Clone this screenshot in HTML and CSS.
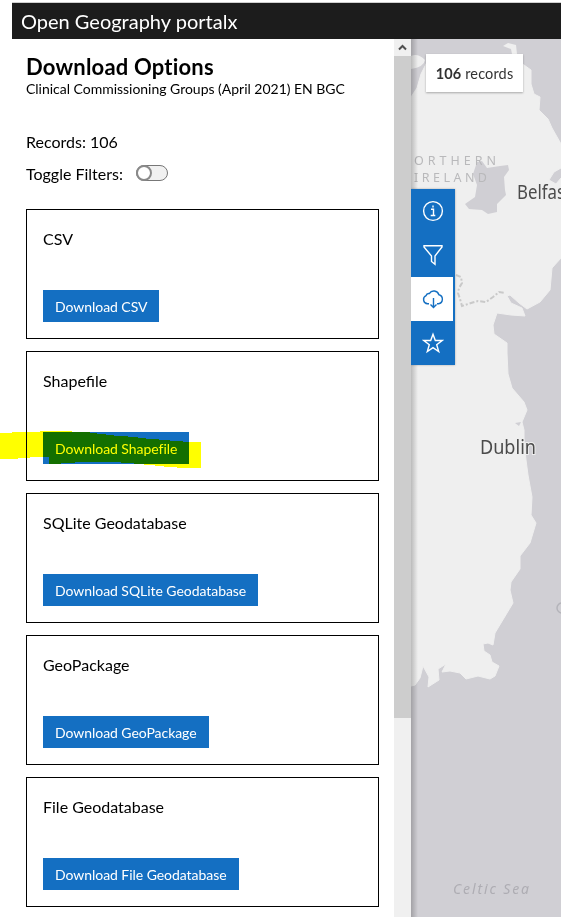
FILE: index.html
```html
<!DOCTYPE html>
<html lang="en">
<head>
<meta charset="utf-8">
<title>Open Geography portalx</title>
<link rel="stylesheet" href="styles.css">
</head>
<body>
<div class="app">
  <header class="topbar"><span>Open Geography portalx</span></header>
  <div class="main">
    <section class="panel">
      <h1>Download Options</h1>
      <p class="subtitle">Clinical Commissioning Groups (April 2021) EN BGC</p>
      <p class="records">Records: 106</p>
      <div class="filters"><span>Toggle Filters:</span><span class="toggle"></span></div>
      <div class="cards">
        <article class="card"><h2>CSV</h2><button>Download CSV</button></article>
        <article class="card"><h2>Shapefile</h2><button>Download Shapefile</button></article>
        <article class="card"><h2>SQLite Geodatabase</h2><button>Download SQLite Geodatabase</button></article>
        <article class="card"><h2>GeoPackage</h2><button>Download GeoPackage</button></article>
        <article class="card"><h2>File Geodatabase</h2><button>Download File Geodatabase</button></article>
      </div>
    </section>
    <div class="scrollbar">
      <svg class="arrow" viewBox="0 0 17 17"><path d="M5 10.500 8.500 7l3.500 3.500" fill="none" stroke="#505050" stroke-width="2"/></svg>
      <div class="thumb"></div>
    </div>
    <section class="mapview">
      <svg class="map" viewBox="411 39 150 878">
        <rect x="411" y="39" width="150" height="878" fill="#d0cfd4"/>
        <path fill="#efefef" stroke="#efefef" stroke-width="1" stroke-linejoin="round" d="M411 97 417 88 421 74 427 62 440 58 510 58 524 65 531 70 531 84 534 94 540 97 539 110 548 119 552 128 561 144V168L554 172 549 180 556 184 561 178V258L552 268 550 290 540 302 527 309 519 303 510 295 507 296 511 303 522 308 525 316 511 315 497 313 493 325 494 334 507 343 507 353 508 374 512 388 524 402 527 410 522 422 524 430 524 440 526 460 528 475 532 497 531 515 536 523 530 543 520 556 520 569 511 582 510 590 513 603 504 618 495 633 493 645 488 643 483 644 484 651 490 655 492 662 499 666 495 676 490 679 478 676 466 679 460 673 450 671 442 672 446 664 438 669 439 680 428 687 429 677 423 666 420 678 415 685 411 686Z"/>
        <path fill="#efefef" d="M411 56Q418 53 425 60 424 67 411 69ZM503 46 508 43 516 45 517 54 512 54 511 49Z"/>
        <path fill="#d0cfd4" d="M477 162 482 161 487 168 500 166 508 165 509 170 504 177 505 190 506 195 497 204 497 212 488 214 482 210 469 209 465 204 475 197 477 185 473 174ZM515 423 521 422 519 426Z"/>
        <path d="M456 275 461 277 462 283 459 288 458 293 460 299 462 306 471 303 478 301 486 302 493 297 499 292 505 293" fill="none" stroke="#c9c9c9" stroke-width="2" stroke-dasharray="5 2 2 2"/>
        <g class="region">
          <text x="414" y="164.500" textLength="82">ORTHERN</text>
          <text x="414" y="181.500" textLength="73">IRELAND</text>
        </g>
        <g class="city">
          <text x="517" y="198.500" textLength="54" lengthAdjust="spacingAndGlyphs">Belfast</text>
          <text x="480" y="454" textLength="56" lengthAdjust="spacingAndGlyphs">Dublin</text>
        </g>
        <text class="sea" x="453" y="894" textLength="76">Celtic Sea</text>
        <path d="M562 603a4.500 4.500 0 1 0 0 10M562 632v4" fill="none" stroke="#b4b4ba" stroke-width="1.500"/>
      </svg>
      <div class="count"><b>106</b>&nbsp;records</div>
      <nav class="tools">
        <a><svg viewBox="0 0 22 22"><circle cx="11" cy="11" r="9.400"/><path d="M9 9.200h2.500v6M8.700 15.500h4.600M11 5.500v2"/></svg></a>
        <a><svg viewBox="0 0 22 22"><path d="M2 1.700h18v1.200L13 12v8.300L9.500 17.500V12L2 2.900Z"/></svg></a>
        <a class="active"><svg viewBox="0 0 22 22"><path d="M7 15.700H5.500A4.200 4.200 0 0 1 4 7.700Q4.700 5.200 7.300 5.600A5.300 5.300 0 0 1 16.900 6.700 4.600 4.600 0 0 1 16.500 15.700H15M11.500 10v9M8.500 16.500l3 3 3-3"/></svg></a>
        <a><svg viewBox="0 0 22 22"><path d="m11 2.200 2.300 6.300h6.900l-5.500 4.300 2 6.800-5.700-4-5.700 4 2-6.800-5.500-4.300h6.900Z"/></svg></a>
      </nav>
    </section>
  </div>
</div>
<svg class="marker" viewBox="0 430 202 40"><path fill="#ff0" d="M0 433H12V432H40V431H72V432H90V433H97V434H106V435H114V436H128V437H138V438H146V439H159V440H170V441H183V442H201V468H177V467H164V466H155V465H144V464H134V463H121V462H75V463H61V464H49V457H30V458H18V459H0Z"/></svg>
</body>
</html>
```

FILE: styles.css
```css
*, *::before, *::after { box-sizing: border-box; }
body {
  margin: 0;
  width: 561px;
  height: 917px;
  overflow: hidden;
  position: relative;
  background: #fff;
  color: #000;
  font-family: Lato, sans-serif;
}
h1, h2, p { margin: 0; font-weight: 400; }
.app {
  height: 917px;
  margin-left: 12px;
  padding-top: 2px;
  background: #fff;
  display: flex;
  flex-direction: column;
}
.topbar {
  flex: 0 0 37px;
  padding-left: 9px;
  border-top: 1px solid #d0d0d0;
  background: #1c1c1c;
  color: #fff;
  font-size: 20px;
  line-height: 36px;
}
.main { flex: 1; min-height: 0; display: flex; }
.panel { width: 382px; padding: 14px 15px 0 14px; overflow: hidden; }
.panel h1 {
  font-size: 22px;
  line-height: 28px;
  font-weight: 700;
  letter-spacing: .2px;
  font-variant-ligatures: none;
}
.subtitle { margin-top: -1px; font-size: 14px; line-height: 17px; letter-spacing: -.02px; white-space: nowrap; }
.records { margin-top: 34px; font-size: 16px; line-height: 21px; }
.filters {
  display: flex;
  align-items: center;
  height: 22px;
  margin-top: 10px;
  font-size: 16px;
}
.toggle {
  width: 32px;
  height: 16px;
  margin: -1px 0 0 13px;
  border: 1px solid #777;
  border-radius: 8px;
  background: #f1f1f1;
}
.toggle::before {
  content: "";
  display: block;
  width: 16px;
  height: 16px;
  margin: -1px;
  border: 2px solid #8a8a8a;
  border-radius: 50%;
  background: #fff;
}
.cards { display: flex; flex-direction: column; gap: 12px; margin-top: 25px; }
.card {
  height: 130px;
  padding: 19px 16px 16px;
  border: 1px solid #000;
  display: flex;
  flex-direction: column;
  justify-content: space-between;
  align-items: flex-start;
}
.card h2 { font-size: 16px; line-height: 20px; }
.card button {
  height: 32px;
  padding: 0 12px;
  border: 0;
  background: #146fc2;
  color: #fff;
  font: 14px Lato, sans-serif;
  letter-spacing: -.05px;
  font-variant-ligatures: common-ligatures;
  white-space: nowrap;
}
.scrollbar { width: 17px; background: #f0f0f0; }
.arrow { display: block; width: 17px; height: 17px; }
.thumb { height: 662px; background: #cdcdcd; }
.mapview { position: relative; flex: 1; overflow: hidden; }
.mapview::after {
  content: "";
  position: absolute;
  inset: 0 auto 0 0;
  width: 7px;
  background: linear-gradient(90deg, rgba(0,0,0,.22), transparent);
}
.map { display: block; width: 150px; height: 878px; }
.region { font: 12.500px "Noto Sans", sans-serif; fill: #b9b9bb; }
.city {
  font: 19px "Noto Sans", sans-serif;
  fill: #4b4b4b;
  stroke: #efefef;
  stroke-width: 2px;
  paint-order: stroke;
}
.sea { font: italic 14px "Noto Sans", sans-serif; fill: #aeadb3; }
.count {
  position: absolute;
  left: 15px;
  top: 15px;
  width: 97px;
  height: 38px;
  display: flex;
  align-items: center;
  justify-content: center;
  background: #fff;
  box-shadow: 0 1px 2px rgba(0,0,0,.3);
  color: #323232;
  font-size: 14.500px;
  letter-spacing: .15px;
}
.tools {
  position: absolute;
  z-index: 1;
  left: 0;
  top: 150px;
  width: 44px;
  background: #146fc2;
  box-shadow: 0 0 2px rgba(0,0,0,.3);
}
.tools a {
  display: flex;
  align-items: center;
  justify-content: center;
  width: 44px;
  height: 44px;
  color: #fff;
}
.tools .active { width: 42px; padding-left: 2px; background: #fff; color: #146fc2; }
.tools svg {
  width: 22px;
  height: 22px;
  fill: none;
  stroke: currentColor;
  stroke-width: 1.400;
}
.marker {
  position: absolute;
  left: 0;
  top: 430px;
  width: 202px;
  height: 40px;
  mix-blend-mode: multiply;
}
```
